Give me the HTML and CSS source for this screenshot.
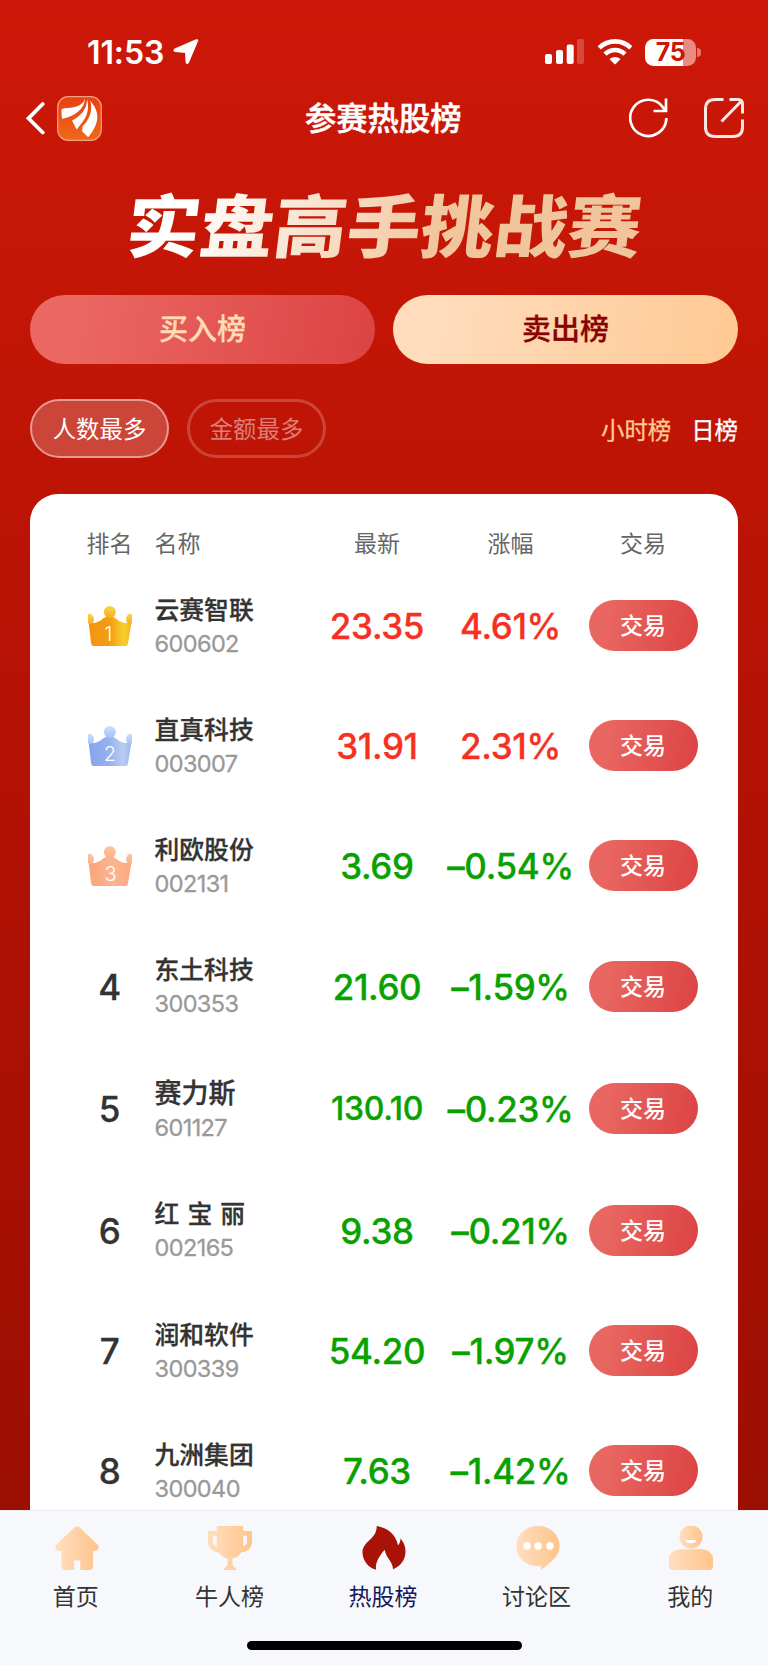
FILE: index.html
```html
<!DOCTYPE html>
<html lang="zh-CN">
<head>
<meta charset="utf-8">
<title>参赛热股榜</title>
<link rel="stylesheet" href="styles.css">
</head>
<body>
<div class="screen">
  <header class="status">
    <span class="clock">11:53</span>
    <svg class="locate" width="26" height="26" viewBox="0 0 26 26"><path d="M24.300 2 15.300 23.200q-1 2-1.900.2L12.800 13.200 2.200 12.300q-1.800-.9-.2-2L22.800 1.200q2-.7 1.500.8z" fill="#fff" stroke="#fff" stroke-width="1.600" stroke-linejoin="round"/></svg>
    <span class="grow"></span>
    <svg class="signal" width="40" height="26" viewBox="0 0 40 26" fill="#fff"><rect x="0" y="15" width="7" height="10" rx="2"/><rect x="11" y="11" width="7" height="14" rx="2"/><rect x="21.700" y="5.500" width="7" height="19.500" rx="2"/><rect x="32" y="0" width="7" height="25" rx="2" opacity=".22"/></svg>
    <svg class="wifi" width="36" height="26" viewBox="0 0 36 26"><g fill="none" stroke="#fff" stroke-width="4.600"><path d="M2.200 8.800Q9 2.400 18 2.400T33.800 8.800"/><path d="M8 15.200Q12.200 11 18 11T28 15.200"/></g><path d="M12.400 20.100Q18 15.700 23.600 20.100L18.700 25q-.7.600-1.400 0z" fill="#fff"/></svg>
    <span class="battery"><b>75</b></span><i class="battery-tip"></i>
  </header>
  <nav class="titlebar">
    <svg class="back" width="20" height="34" viewBox="0 0 20 34"><path d="M17.700 3 3.500 17.300l14.200 14.200" fill="none" stroke="#fff" stroke-width="3.800" stroke-linecap="round" stroke-linejoin="miter"/></svg>
    <svg class="logo" width="45" height="45" viewBox="0 0 45 45"><defs><linearGradient id="lg" x2="0" y2="1"><stop stop-color="#ea4010"/><stop offset="1" stop-color="#f0681a"/></linearGradient></defs><rect x=".7" y=".7" width="43.600" height="43.600" rx="10.500" fill="url(#lg)" stroke="#f3a183" stroke-width="1.200"/><g fill="#fff"><path d="M28 2.500C26 9.500 19 11.500 7.500 12.300 4.500 12.600 4.300 14 4.400 16L5 22.700C14 21.500 27.500 15 28 2.500z"/><path d="M30 3C30 14 23 20.500 15 24.500l4.200 8.300q.5.900 1.200 0l2.800-4C28 24 33.500 14.500 30 3z"/><path d="M33 4.500C36.500 14 32 24.500 25.500 30.300l-.3 5.200 5.500 5.300q.7.600 1.300-.5C37 33.500 42.500 25 39.500 15.500 38 10 35 7 33 4.500z"/></g></svg>
    <h1>参赛热股榜</h1>
    <svg class="refresh" width="40" height="42" viewBox="0 0 40 42"><path d="M37.400 21A18.100 18.100 0 1 1 34.300 10.700L37 14M37 1.500V14H24.500" fill="none" stroke="#fff" stroke-width="2.700"/></svg>
    <svg class="share" width="42" height="42" viewBox="0 0 42 42"><path d="M20.500 2.500H12Q2.500 2.500 2.500 12V30q0 9.500 9.500 9.500H30q9.500 0 9.500-9.500V22.500M26.500 2.500H35q4.500 0 4.500 4.500v9.500M37.500 5 18.500 24.500" fill="none" stroke="#fff" stroke-opacity=".9" stroke-width="3"/></svg>
  </nav>
  <div class="banner"><span>实盘高手挑战赛</span></div>
  <div class="tabs"><button class="tab buy">买入榜</button><button class="tab sell">卖出榜</button></div>
  <div class="filters">
    <button class="pill active">人数最多</button><button class="pill">金额最多</button>
    <span class="grow"></span>
    <span class="hour">小时榜</span><span class="day">日榜</span>
  </div>
  <main class="card">
    <div class="line head"><span>排名</span><span class="name">名称</span><span>最新</span><span>涨幅</span><span>交易</span></div>
    <div class="line row up">
      <svg class="crown" width="46" height="42" viewBox="0 0 46 42"><defs><linearGradient id="c1" x2="1"><stop stop-color="#f3950e"/><stop offset=".5" stop-color="#f39c12"/><stop offset=".82" stop-color="#f9cf2b"/><stop offset="1" stop-color="#f5b41d"/></linearGradient><linearGradient id="b1" x2="0" y2="1"><stop stop-color="#fbd646"/><stop offset="1" stop-color="#f8ac22"/></linearGradient></defs><path d="M1.500 17Q9 20 16 13.500l3-1.500h7l3 1.500Q36 20 44.500 17L41 38.500q-.4 2.500-2.500 2.500h-32Q4.500 41 4.200 38.500z" fill="url(#c1)"/><g fill="url(#b1)"><circle cx="22.800" cy="7" r="6"/><path d="M1 9q5-1 6 5 0 4-4 5.500L1 18zM45 9q-5-1-6 5 0 4 4 5.500L45 18z"/></g><text x="21.500" y="35.500">1</text></svg>
      <div class="name"><b>云赛智联</b><i>600602</i></div><em>23.35</em><em>4.61%</em><button>交易</button></div>
    <div class="line row up">
      <svg class="crown" width="46" height="42" viewBox="0 0 46 42"><defs><linearGradient id="c2" x2="1"><stop stop-color="#85a4ec"/><stop offset=".5" stop-color="#98b1ef"/><stop offset=".8" stop-color="#b9cdf2"/><stop offset="1" stop-color="#9bb5f0"/></linearGradient><linearGradient id="b2" x2="0" y2="1"><stop stop-color="#c9e0ff"/><stop offset="1" stop-color="#a3c1fb"/></linearGradient></defs><path d="M1.500 17Q9 20 16 13.500l3-1.500h7l3 1.500Q36 20 44.500 17L41 38.500q-.4 2.500-2.500 2.500h-32Q4.500 41 4.200 38.500z" fill="url(#c2)"/><g fill="url(#b2)"><circle cx="22.800" cy="7" r="6"/><path d="M1 9q5-1 6 5 0 4-4 5.500L1 18zM45 9q-5-1-6 5 0 4 4 5.500L45 18z"/></g><text x="23" y="35.500">2</text></svg>
      <div class="name"><b>直真科技</b><i>003007</i></div><em>31.91</em><em>2.31%</em><button>交易</button></div>
    <div class="line row">
      <svg class="crown" width="46" height="42" viewBox="0 0 46 42"><defs><linearGradient id="c3" x2="1"><stop stop-color="#fba57e"/><stop offset=".6" stop-color="#fdb48f"/><stop offset="1" stop-color="#fca981"/></linearGradient><linearGradient id="b3" x2="0" y2="1"><stop stop-color="#fdc9a6"/><stop offset="1" stop-color="#fcae86"/></linearGradient></defs><path d="M1.500 17Q9 20 16 13.500l3-1.500h7l3 1.500Q36 20 44.500 17L41 38.500q-.4 2.500-2.500 2.500h-32Q4.500 41 4.200 38.500z" fill="url(#c3)"/><g fill="url(#b3)"><circle cx="22.800" cy="7" r="6"/><path d="M1 9q5-1 6 5 0 4-4 5.500L1 18zM45 9q-5-1-6 5 0 4 4 5.500L45 18z"/></g><text x="23.500" y="35.500">3</text></svg>
      <div class="name"><b>利欧股份</b><i>002131</i></div><em>3.69</em><em>–0.54%</em><button>交易</button></div>
    <div class="line row"><em class="rank">4</em><div class="name"><b>东土科技</b><i>300353</i></div><em>21.60</em><em>–1.59%</em><button>交易</button></div>
    <div class="line row tall"><em class="rank">5</em><div class="name"><b>赛力斯</b><i>601127</i></div><em class="long">130.10</em><em>–0.23%</em><button>交易</button></div>
    <div class="line row"><em class="rank">6</em><div class="name"><b class="spaced">红 宝 丽</b><i>002165</i></div><em>9.38</em><em>–0.21%</em><button>交易</button></div>
    <div class="line row"><em class="rank">7</em><div class="name"><b>润和软件</b><i>300339</i></div><em>54.20</em><em>–1.97%</em><button>交易</button></div>
    <div class="line row"><em class="rank">8</em><div class="name"><b>九洲集团</b><i>300040</i></div><em>7.63</em><em>–1.42%</em><button>交易</button></div>
  </main>
  <footer class="bottom">
    <div class="menu">
      <a><svg width="44" height="44" viewBox="0 0 44 44"><defs><linearGradient id="p" x2="1"><stop offset=".1" stop-color="#ffdcbb"/><stop offset="1" stop-color="#ffc48a"/></linearGradient></defs><path d="M19.600 1.200Q22 -.8 24.400 1.200L42.500 18.500q1.500 1.500 1 3.500-1 3-4.500 3H38V40q0 4-4 4H25.300V34.500H19V44H10.500q-4 0-4-4V25H5Q1.500 25 .5 22 0 20 1.500 18.500z" fill="url(#p)"/></svg><span>首页</span></a>
      <a><svg width="44" height="44" viewBox="0 0 44 44"><path d="M8.700 0H35.300V5H44v9.500C44 21.500 40 26 33.500 26.300 31 30 28 31.800 24.500 32.500V39L29 44H15l4.500-5V32.500C16 31.800 13 30 10.500 26.300 4 26 0 21.500 0 14.500V5H8.700zM8.700 9.800H5v5q0 4.500 3.700 5.700zM35.300 9.800V20.500Q39 19.300 39 14.800V9.800z" fill="url(#p)" fill-rule="evenodd"/></svg><span>牛人榜</span></a>
      <a class="on"><svg width="44" height="44" viewBox="0 0 44 44"><path d="M14.700 0C26 2 33.500 8 36 19.300q2.300-2 2.500-6.800C41 15.500 43.500 19.500 43.500 25.500 43.500 34 38 40.500 31 43.300 31 35.500 24.500 33 22.700 23.700 18 29 13 36 14 43.700 6 42 .5 34 .5 26.500.5 15 15 13.500 14.700 0z" fill="#a81207"/></svg><span>热股榜</span></a>
      <a><svg width="44" height="44" viewBox="0 0 44 44"><path d="M22 0C34 0 43.500 8.500 43.500 20 43.500 29 38 34 24.700 44V40C10 41 .5 32 .5 20 .5 8.500 10 0 22 0z" fill="url(#p)"/><g fill="#fff"><circle cx="11" cy="20" r="3.700"/><circle cx="22" cy="20" r="3.700"/><circle cx="34" cy="20" r="3.700"/></g></svg><span>讨论区</span></a>
      <a><svg width="44" height="44" viewBox="0 0 44 44"><g fill="url(#p)"><circle cx="22" cy="11" r="11.500"/><path d="M11 23.300H33Q44 24 44 34V40q0 4-4 4H4q-4 0-4-4V34Q0 24 11 23.300z"/></g><path d="M17 14H27Q27 17.300 22 17.300T17 14z" fill="#fff"/></svg><span>我的</span></a>
    </div>
    <div class="home-bar"></div>
  </footer>
</div>
</body>
</html>
```
FILE: styles.css
```css
* { box-sizing: border-box; }
body { margin: 0; font-family: Inter, "Noto Sans CJK SC", sans-serif; }
button { border: 0; padding: 0; font: inherit; display: block; }
b, i, em { font-style: normal; }
svg { display: block; flex: none; }
.grow { flex: 1; }
.screen { width: 768px; height: 1665px; display: flex; flex-direction: column; overflow: hidden; background: linear-gradient(#cd1808, #c11506 22%, #b51205 42%, #9c0e03 92%); }
.status { height: 80px; display: flex; align-items: center; padding: 24px 67px 0 87px; color: #fff; }
.clock { width: 86px; font-size: 32px; font-weight: 600; letter-spacing: -.1px; white-space: nowrap; }
.signal { margin-right: 12px; }
.wifi { margin-right: 12px; }
.battery { width: 51px; height: 27px; border-radius: 8.500px; background: linear-gradient(90deg, #fff 75%, #e78c83 75%); display: flex; justify-content: center; align-items: center; color: #c91708; font-size: 25px; line-height: 27px; }
.battery b { font-weight: 700; letter-spacing: -.5px; }
.battery-tip { width: 4px; height: 9px; margin-left: 1px; border-radius: 0 4px 4px 0; background: #e07a70; }
.titlebar { height: 76px; display: flex; align-items: center; padding: 0 23px 0 25px; color: #fff; }
.logo { margin-left: 12px; }
.titlebar h1 { flex: 1; margin: 0 0 0 -12px; padding: 2px 0 0 215px; font-size: 31.300px; font-weight: 500; -webkit-text-stroke: .5px #fff; line-height: 40px; white-space: nowrap; }
.refresh { margin-right: 34px; }
.banner { height: 139px; display: flex; justify-content: center; padding-top: 23px; }
.banner span { height: 94px; font-size: 73.500px; line-height: 94px; font-weight: 900; white-space: nowrap; transform: translateY(2px) skewX(-7deg) scaleY(.93); color: transparent; background: linear-gradient(105deg, #fff 12%, #f2c69d 60%, #f0c59c); background-clip: text; -webkit-background-clip: text; }
.tabs { display: flex; gap: 18px; padding: 0 30px; }
.tab { flex: 1; height: 69px; border-radius: 35px; font-size: 29px; font-weight: 500; line-height: 69px; -webkit-text-stroke: .3px; }
.buy { color: #ffdcb3; background: linear-gradient(100deg, #ea6762 15%, #dc4343); }
.sell { color: #890303; background: linear-gradient(100deg, #ffdcbb 15%, #ffc994); }
.filters { height: 59px; margin: 35px 30px 36px; display: flex; align-items: center; color: #fff; font-size: 23.400px; }
.pill { width: 139px; height: 59px; margin-right: 18px; border-radius: 30px; border: 3px solid #cb4438; color: #db7f77; background: none; line-height: 53px; padding-top: 1px; }
.pill.active { color: #fff; background: #cc4539; border: 2px solid #e69a93; line-height: 55px; }
.hour { color: #ffca91; margin-right: 20px; -webkit-text-stroke: .3px; }
.day { -webkit-text-stroke: .3px; }
.card { flex: 1; min-height: 0; overflow: hidden; margin: 0 30px; background: #fff; border-radius: 28px 28px 0 0; }
.line { display: grid; grid-template-columns: 75px 163px 134px 133px 132px; align-items: center; justify-items: center; padding-left: 42px; }
.line > .name { justify-self: start; padding-left: 7.500px; }
.head { height: 71.500px; padding-top: 28.500px; line-height: 43px; font-size: 23px; color: #666; }
.row { height: 120.200px; color: #08a100; }
.row.up { color: #f73122; }
.row.tall { height: 124px; }
.row > em { font-size: 35px; font-weight: 500; white-space: nowrap; letter-spacing: -.35px; padding-top: 1px; -webkit-text-stroke: .3px; }
.row > .long { font-size: 32px; }
.row > .rank { color: #333; }
.name b, .name i { display: block; white-space: nowrap; }
.row > .name { padding-top: 2px; }
.name b { font-size: 24.800px; font-weight: 500; line-height: 34px; color: #333; -webkit-text-stroke: .3px; }
.name .spaced { word-spacing: 1.500px; }
.tall .name b { font-size: 27px; }
.row.tall .name { padding-top: 5px; }
.name i { font-size: 23.500px; line-height: 34px; color: #999; letter-spacing: -.6px; -webkit-text-stroke: .3px; }
.row button { width: 109px; height: 51px; border-radius: 26px; background: linear-gradient(100deg, #e96762 15%, #dc4343); color: #fff; font-size: 23px; line-height: 52px; font-weight: 500; }
.crown text { font: 300 20px Inter, sans-serif; fill: #fff; text-anchor: middle; }
.bottom { flex: none; height: 155px; background: #f7f8fb; border-top: 1px solid #ececec; }
.menu { display: grid; grid-template-columns: repeat(5, 1fr); padding-top: 15px; }
.menu a { display: flex; flex-direction: column; align-items: center; gap: 10px; font-size: 23px; line-height: 34px; color: #333; }
.menu span { padding-right: 2px; }
.menu .on { color: #151a5e; }
.home-bar { width: 275px; height: 9px; margin: 27px auto 0; border-radius: 5px; background: #000; }
```
